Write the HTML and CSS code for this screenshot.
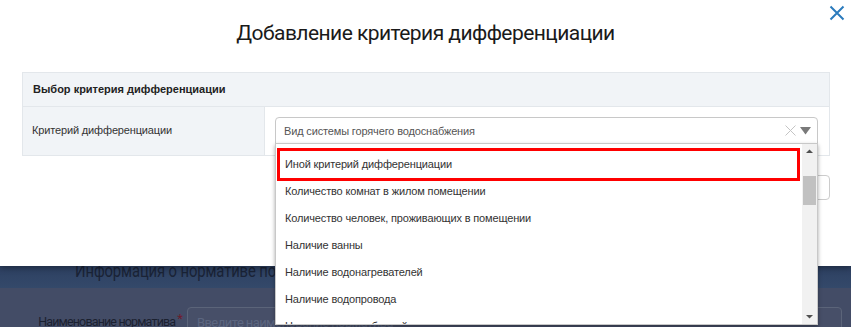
FILE: index.html
```html
<!DOCTYPE html>
<html lang="ru">
<head>
  <meta charset="UTF-8">
  <meta name="viewport" content="width=device-width, initial-scale=1.0">
  <title>Добавление критерия дифференциации</title>
  <link rel="stylesheet" href="styles.css">
</head>
<body>
<div class="page">
  <div class="page-head"><span class="page-head-text">Информация о нормативе потребления коммунальной услуги</span></div>
  <div class="page-body">
    <div class="field-row">
      <label class="field-label">Наименование норматива<span class="req">*</span></label>
      <div class="field-input">Введите наименование норматива</div>
    </div>
  </div>
</div>

<div class="modal">
  <button class="modal-close" aria-label="Закрыть">
    <svg width="16" height="16" viewBox="0 0 16 16"><path d="M1.5 1.5L14.5 14.5M14.5 1.5L1.5 14.5" stroke="#2b7bbd" stroke-width="2" fill="none"/></svg>
  </button>
  <h2 class="modal-title">Добавление критерия дифференциации</h2>

  <div class="panel">
    <div class="panel-head">Выбор критерия дифференциации</div>
    <div class="panel-row">
      <div class="panel-label">Критерий дифференциации</div>
      <div class="panel-value">
        <div class="select">
          <div class="select-box">
            <span class="select-text">Вид системы горячего водоснабжения</span>
            <svg class="select-clear" width="11" height="11" viewBox="0 0 11 11"><path d="M0.5 0.5L10.5 10.5M10.5 0.5L0.5 10.5" stroke="#c4c4c4" stroke-width="1" fill="none"/></svg>
            <svg class="select-arrow" width="11" height="8" viewBox="0 0 11 8"><path d="M0 0H11L5.5 7.5Z" fill="#7a7a7a"/></svg>
          </div>
          <div class="dropdown">
            <ul class="options">
              <li class="option active">Иной критерий дифференциации</li>
              <li class="option">Количество комнат в жилом помещении</li>
              <li class="option">Количество человек, проживающих в помещении</li>
              <li class="option">Наличие ванны</li>
              <li class="option">Наличие водонагревателей</li>
              <li class="option">Наличие водопровода</li>
              <li class="option">Наличие водоразборной колонки</li>
            </ul>
            <div class="scrollbar">
              <svg class="scroll-btn" width="15" height="14" viewBox="0 0 15 14"><path d="M4 9H11L7.5 5.5Z" fill="#505050"/></svg>
              <div class="scroll-track"><div class="scroll-thumb"></div></div>
              <svg class="scroll-btn" width="15" height="14" viewBox="0 0 15 14"><path d="M4 5H11L7.5 8.5Z" fill="#505050"/></svg>
            </div>
          </div>
        </div>
      </div>
    </div>
  </div>

  <div class="modal-actions">
    <button class="btn">Добавить</button>
  </div>
</div>
</body>
</html>
```

FILE: styles.css
```css
html, body {
  overflow: hidden;
}
body {
  margin: 0;
  font-family: "Liberation Sans", Arial, sans-serif;
  font-size: 11px;
  letter-spacing: -0.15px;
  color: #333;
  height: 327px;
  position: relative;
}

/* page behind the modal (darkened) */
.page {
  padding-top: 246px;
  background: #434c66;
  height: 327px;
  box-sizing: border-box;
}
.page-head {
  height: 42px;
  line-height: 50px;
  background: linear-gradient(#27385a, #34496a);
  padding-left: 75px;
  font-family: Roboto, sans-serif;
  font-size: 19px;
  color: #1a2336;
  white-space: nowrap;
  overflow: hidden;
}
.page-head-text {
  display: inline-block;
  transform: scaleX(0.78);
  transform-origin: left center;
}
.page-body {
  padding-top: 19px;
}
.field-row {
  display: flex;
  align-items: flex-start;
}
.field-label {
  width: 182px;
  text-align: right;
  padding-top: 7px;
  font-family: Roboto, sans-serif;
  font-size: 12.5px;
  letter-spacing: -0.85px;
  color: #1b2130;
  white-space: nowrap;
  box-sizing: border-box;
}
.req {
  color: #6e1b2c;
  font-size: 13px;
  vertical-align: top;
  position: relative;
  top: -3px;
  margin-left: 2px;
}
.field-input {
  margin-left: 5px;
  width: 655px;
  height: 30px;
  line-height: 30px;
  padding-left: 9px;
  box-sizing: border-box;
  border: 1px solid #5b6479;
  border-radius: 4px;
  background: #474f68;
  color: #5c6680;
  font-family: Roboto, sans-serif;
  font-size: 13px;
  letter-spacing: -0.6px;
  white-space: nowrap;
  overflow: hidden;
}

/* modal */
.modal {
  position: absolute;
  top: 0;
  left: 0;
  right: 0;
  height: 266px;
  background: #fff;
  box-shadow: 0 2px 6px rgba(0, 0, 0, 0.35);
}
.modal-close {
  position: absolute;
  top: 5px;
  right: 6px;
  border: none;
  background: none;
  padding: 0;
  width: 16px;
  height: 16px;
}
.modal-close svg { display: block; }
.modal-title {
  margin: 0;
  padding-top: 19px;
  height: 53px;
  box-sizing: border-box;
  text-align: center;
  font-family: Roboto, sans-serif;
  font-weight: normal;
  font-size: 21px;
  letter-spacing: -0.55px;
  line-height: 28px;
  color: #1a1a1a;
}
.panel {
  margin: 19px 21px 0 22px;
  border: 1px solid #e3e7eb;
}
.panel-head {
  height: 33px;
  line-height: 33px;
  padding-left: 10px;
  background: #f1f4f7;
  border-bottom: 1px solid #e3e7eb;
  font-weight: bold;
  font-size: 11px;
  letter-spacing: 0;
  color: #222;
}
.panel-row {
  display: flex;
  height: 48px;
}
.panel-label {
  width: 242px;
  background: #f1f4f7;
  border-right: 1px solid #e3e7eb;
  padding-left: 9px;
  line-height: 46px;
  box-sizing: border-box;
  color: #333;
}
.panel-value {
  flex: 1;
  padding: 10px 11px 0 10px;
}
.select {
  position: relative;
}
.select-box {
  height: 27px;
  box-sizing: border-box;
  border: 1px solid #c8c8c8;
  border-radius: 4px 4px 0 0;
  display: flex;
  align-items: center;
  padding: 0 6px 0 8px;
  background: #fff;
}
.select-text {
  flex: 1;
  color: #555;
}
.select-clear { margin-right: 4px; }

.dropdown {
  position: absolute;
  top: 26px;
  left: 0;
  right: 0;
  height: 182px;
  box-sizing: border-box;
  border: 1px solid #c8c8c8;
  background: #fff;
  box-shadow: 0 2px 4px rgba(0, 0, 0, 0.35);
  display: flex;
  overflow: hidden;
  z-index: 2;
}
.options {
  list-style: none;
  margin: 0;
  padding: 7px 0 0;
  flex: 1;
}
.option {
  height: 27px;
  line-height: 27px;
  padding-left: 9px;
  color: #333;
  white-space: nowrap;
  position: relative;
}
.option.active::after {
  content: "";
  position: absolute;
  top: -3px;
  left: 1px;
  right: 2px;
  height: 33px;
  box-sizing: border-box;
  border: 3px solid #f00;
}
.scrollbar {
  width: 15px;
  background: #f1f1f1;
  display: flex;
  flex-direction: column;
}
.scroll-btn { display: block; flex: none; }
.scroll-track {
  flex: 1;
  padding: 18px 1px 0;
}
.scroll-thumb {
  height: 29px;
  background: #c1c1c1;
}

.modal-actions {
  display: flex;
  justify-content: flex-end;
  margin: 19px 21px 0 0;
}
.btn {
  width: 110px;
  height: 25px;
  border: 1px solid #ccc;
  border-radius: 4px;
  background: #fff;
  font-family: "Liberation Sans", Arial, sans-serif;
  font-size: 12px;
  color: #333;
}
```
